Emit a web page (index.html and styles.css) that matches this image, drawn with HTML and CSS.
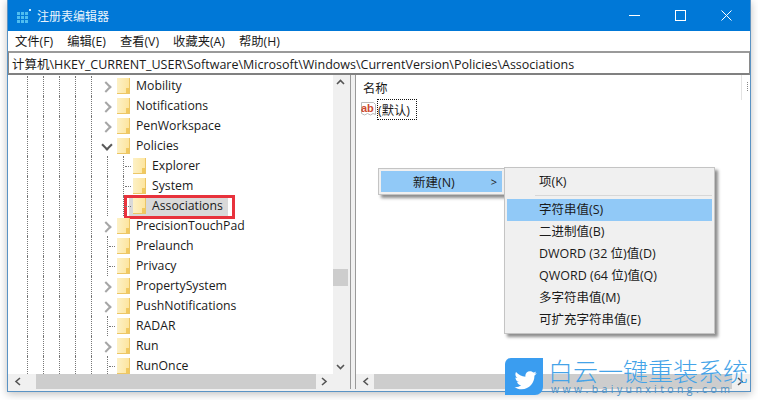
FILE: index.html
```html
<!DOCTYPE html>
<html lang="zh-CN">
<head>
<meta charset="utf-8">
<title>注册表编辑器</title>
<link rel="stylesheet" href="styles.css">
</head>
<body>
<div class="window">
  <header class="titlebar">
    <svg class="appicon" width="14" height="14" viewBox="0 0 14 14"><g fill="#4fbdf0"><rect x="0" y="3" width="3" height="3"/><rect x="4" y="3" width="3" height="3"/><rect x="8" y="3" width="3" height="3"/><rect x="0" y="7" width="3" height="3"/><rect x="4" y="7" width="3" height="3"/><rect x="8" y="7" width="3" height="3"/><rect x="0" y="11" width="3" height="3"/><rect x="4" y="11" width="3" height="3"/><rect x="8" y="11" width="3" height="3"/></g><rect x="12" y="0" width="2" height="2" fill="#cdeafa"/></svg>
    <span class="title">注册表编辑器</span>
    <div class="controls">
      <svg width="11" height="11" viewBox="0 0 11 11"><path d="M0 5.500h11" stroke="#fff" fill="none"/></svg>
      <svg width="11" height="11" viewBox="0 0 11 11"><rect x=".5" y=".5" width="10" height="10" stroke="#fff" fill="none"/></svg>
      <svg width="11" height="11" viewBox="0 0 11 11"><path d="M.5.5l10 10M10.500.5l-10 10" stroke="#fff" fill="none"/></svg>
    </div>
  </header>
  <nav class="menubar">
    <span>文件(F)</span><span>编辑(E)</span><span>查看(V)</span><span>收藏夹(A)</span><span>帮助(H)</span>
  </nav>
  <div class="address">计算机\HKEY_CURRENT_USER\Software\Microsoft\Windows\CurrentVersion\Policies\Associations</div>
  <main class="panes">
    <section class="left">
      <div class="tree-wrap">
        <div class="tree">
          <div class="row"><i></i><i></i><i></i><i></i><i></i><b class="tw closed"></b><em class="fld"></em><span>Mobility</span></div>
          <div class="row"><i></i><i></i><i></i><i></i><i></i><b class="tw closed"></b><em class="fld"></em><span>Notifications</span></div>
          <div class="row"><i></i><i></i><i></i><i></i><i></i><b class="tw closed"></b><em class="fld"></em><span>PenWorkspace</span></div>
          <div class="row"><i></i><i></i><i></i><i></i><i></i><b class="tw open"></b><em class="fld"></em><span>Policies</span></div>
          <div class="row"><i></i><i></i><i></i><i></i><i></i><i></i><b class="leaf"></b><em class="fld"></em><span>Explorer</span></div>
          <div class="row"><i></i><i></i><i></i><i></i><i></i><i></i><b class="leaf"></b><em class="fld"></em><span>System</span></div>
          <div class="row"><i></i><i></i><i></i><i></i><i></i><i></i><b class="leaf"></b><em class="fld"></em><span>Associations</span><u class="redbox"></u></div>
          <div class="row"><i></i><i></i><i></i><i></i><i></i><b class="tw closed"></b><em class="fld"></em><span>PrecisionTouchPad</span></div>
          <div class="row"><i></i><i></i><i></i><i></i><i></i><b class="leaf"></b><em class="fld"></em><span>Prelaunch</span></div>
          <div class="row"><i></i><i></i><i></i><i></i><i></i><b class="leaf"></b><em class="fld"></em><span>Privacy</span></div>
          <div class="row"><i></i><i></i><i></i><i></i><i></i><b class="tw closed"></b><em class="fld"></em><span>PropertySystem</span></div>
          <div class="row"><i></i><i></i><i></i><i></i><i></i><b class="tw closed"></b><em class="fld"></em><span>PushNotifications</span></div>
          <div class="row"><i></i><i></i><i></i><i></i><i></i><b class="leaf"></b><em class="fld"></em><span>RADAR</span></div>
          <div class="row"><i></i><i></i><i></i><i></i><i></i><b class="tw closed"></b><em class="fld"></em><span>Run</span></div>
          <div class="row"><i></i><i></i><i></i><i></i><i></i><b class="leaf"></b><em class="fld"></em><span>RunOnce</span></div>
        </div>
        <div class="vscroll">
          <svg class="arrow" width="15" height="15" viewBox="0 0 15 15"><path d="M4 9l3.500-3.500L11 9" stroke="#555" stroke-width="1.600" fill="none"/></svg>
          <div class="vtrack"><div class="vthumb"></div></div>
          <svg class="arrow" width="15" height="15" viewBox="0 0 15 15"><path d="M4 6l3.500 3.500L11 6" stroke="#555" stroke-width="1.600" fill="none"/></svg>
        </div>
      </div>
      <div class="hscroll l">
        <svg class="arrow" width="18" height="15" viewBox="0 0 18 15"><path d="M12 4L8 7.500l4 3.500" stroke="#555" stroke-width="1.600" fill="none"/></svg>
        <div class="hthumb"></div>
        <svg class="arrow" width="18" height="15" viewBox="0 0 18 15"><path d="M6 4l4 3.500L6 11" stroke="#555" stroke-width="1.600" fill="none"/></svg>
      </div>
    </section>
    <section class="right">
      <div class="list">
        <div class="colhead"><span>名称</span><span class="hdiv"></span></div>
        <div class="value">
          <svg width="16" height="17" viewBox="0 0 16 17"><path d="M.5 1.500h12l2 2v10l-2.500-1-2.500 1.500-3-1.500-3 1.500-3-1.500z" fill="#fff" stroke="#bbb"/><text x="0" y="11" class="abtxt">ab</text></svg>
          <span class="focus">(默认)</span>
        </div>
      </div>
      <div class="hscroll">
        <svg class="arrow" width="18" height="15" viewBox="0 0 18 15"><path d="M12 4L8 7.500l4 3.500" stroke="#555" stroke-width="1.600" fill="none"/></svg>
        <div class="hthumb"></div>
        <svg class="arrow" width="18" height="15" viewBox="0 0 18 15"><path d="M6 4l4 3.500L6 11" stroke="#555" stroke-width="1.600" fill="none"/></svg>
      </div>
    </section>
  </main>
</div>
<div class="menu first">
  <div class="mi hot"><span>新建(N)</span><span class="chev">&gt;</span></div>
</div>
<div class="menu sub">
  <div class="si">项(K)</div>
  <hr class="sep">
  <div class="si hot">字符串值(S)</div>
  <div class="si">二进制值(B)</div>
  <div class="si">DWORD (32 位)值(D)</div>
  <div class="si">QWORD (64 位)值(Q)</div>
  <div class="si">多字符串值(M)</div>
  <div class="si">可扩充字符串值(E)</div>
</div>
<div class="brand">
  <svg class="badge" width="38" height="37" viewBox="0 0 38 37"><path d="M6 0h32v29a8 8 0 0 1-8 8H0V6a6 6 0 0 1 6-6z" fill="#3a9df0"/><path transform="translate(4.500 5) scale(.88)" d="M31 11.500c-1 .5-2 .7-3 .8 1-.6 1.900-1.600 2.300-2.700-1 .6-2.100 1-3.300 1.300-1-1-2.300-1.600-3.800-1.600-2.900 0-5.200 2.300-5.200 5.200 0 .4 0 .8.100 1.200C13.800 15.400 10 13.300 7.400 10.200c-.4.800-.7 1.700-.7 2.600 0 1.800.9 3.400 2.300 4.300-.8 0-1.600-.3-2.300-.6 0 2.500 1.800 4.600 4.100 5.100-.8.200-1.600.2-2.300.1.600 2.100 2.600 3.600 4.800 3.600-2.200 1.700-4.900 2.500-7.600 2.200 2.300 1.500 5 2.300 7.900 2.300 9.500 0 14.700-7.900 14.700-14.700v-.7c1-.7 1.900-1.600 2.700-2.900z" fill="#fff"/></svg>
  <div class="brandtext">
    <div class="bcn">白云一键重装系统</div>
    <div class="ben">www.baiyunxitong.com</div>
  </div>
</div>
</body>
</html>
```
FILE: styles.css
```css
* { box-sizing: border-box; }
html, body { margin: 0; height: 100%; }
body {
  width: 758px; height: 400px; overflow: hidden; position: relative;
  background: #fff;
  font-family: "Open Sans", "Noto Sans CJK SC", sans-serif;
  font-size: 12.300px; color: #1a1a1a;
}
.window {
  margin-left: 7px; width: 744px; height: 392px;
  border: 1px solid #5a93c4; border-top: 0;
  background: #f0f0f0;
  box-shadow: 0 2px 8px rgba(0,0,0,.25);
  display: flex; flex-direction: column;
}
.titlebar {
  height: 31px; background: #0078d7; color: #e9f4fc;
  display: flex; align-items: center; padding-left: 9px; flex: none;
}
.appicon { margin-right: 6px; }
.title { font-size: 12px; }
.controls { margin-left: auto; display: flex; gap: 35px; padding-right: 18px; align-items: center; }
.menubar {
  height: 20px; background: #fff; display: flex; align-items: center; flex: none;
  padding-left: 7px; gap: 14px; font-size: 12.300px;
}
.address {
  height: 24px; flex: none; background: #fff;
  border: 1px solid #8a8a8a; border-width: 2px 1px;
  border-color: #9a9a9a #8a8a8a #808080;
  display: flex; align-items: center; padding-left: 3px;
  font-size: 12.500px; white-space: nowrap;
}
.panes { flex: 1; display: flex; min-height: 0; gap: 4px; padding-bottom: 2px; background: #f0f0f0; }
.left { width: 343px; display: flex; flex-direction: column; background: #fff; border-right: 1px solid #999; flex: none; }
.tree-wrap { flex: 1; display: flex; min-height: 0; }
.tree { flex: 1; overflow: hidden; padding: 1px 0 0 19px; isolation: isolate; }
.row { height: 20px; display: flex; align-items: center; position: relative; white-space: nowrap; }
.row i { width: 16px; height: 20px; flex: none; border-left: 1px dotted #777; }
.tw { width: 10px; height: 20px; flex: none; position: relative; }
.tw::after {
  content: ""; position: absolute; width: 6px; height: 6px;
  border: solid #a6a6a6; border-width: 2px 2px 0 0;
}
.tw.closed::after { transform: rotate(45deg); left: -5px; top: 7px; }
.tw.open::after { transform: rotate(135deg); border-color: #595959; left: -4px; top: 5px; }
.leaf {
  width: 10px; height: 20px; flex: none;
  border-left: 1px dotted #777; position: relative;
}
.leaf::after { content: ""; position: absolute; left: 1px; top: 10px; width: 6px; border-top: 1px dotted #777; }
.fld {
  width: 13px; height: 16px; flex: none; margin-right: 6px; position: relative;
  background: linear-gradient(to right, #fdf1c6, #fde59f);
  border-right: 1px solid #ecc666; border-bottom: 1px solid #ecc666;
}
.fld::after { content: ""; position: absolute; right: 0; bottom: 0; width: 3px; height: 5px; background: #f1c95f; }
.row span { font-size: 12.250px; line-height: 16px; }
.redbox {
  position: absolute; left: 97px; top: -1px; width: 111px; height: 24px; z-index: -1;
  border: 3px solid #e8323c;
  background: linear-gradient(#d9d9d9, #d9d9d9) no-repeat 2px 0 / 99px 100%;
  background-origin: padding-box; background-clip: padding-box;
}
.vscroll { width: 17px; flex: none; background: #f0f0f0; display: flex; flex-direction: column; }
.arrow { flex: none; display: block; }
.vtrack { flex: 1; position: relative; }
.vthumb { position: absolute; top: 179px; left: 0; width: 15px; height: 17px; background: #cdcdcd; }
.hscroll { height: 15px; flex: none; display: flex; background: #f0f0f0; }
.hscroll.l { padding-right: 16px; }
.hscroll.l .hthumb { margin-left: 10px; }
.hthumb { flex: 1; background: #cdcdcd; }
.right { flex: 1; display: flex; flex-direction: column; background: #fff; border-left: 1px solid #999; min-width: 0; }
.list { flex: 1; min-height: 0; padding: 3px 0 0 7px; }
.colhead { height: 20px; display: flex; align-items: center; }
.hdiv {
  margin-left: auto; margin-right: 2px; align-self: flex-start; margin-top: -3px;
  width: 7px; height: 25px; border-left: 1px solid #e3e3e3; position: relative;
}
.hdiv::after { content: ""; position: absolute; right: 0; top: 7px; height: 9px; border-right: 1px dotted #888; }
.value { display: flex; align-items: center; height: 21px; margin: 1px 0 0 -2px; }
.abtxt { font: bold 11px "Liberation Sans", sans-serif; fill: #cf4a2f; }
.focus { border: 1px dotted #111; padding: 0; height: 21px; width: 40px; display: flex; align-items: center; white-space: nowrap; }
.menu { position: absolute; background: #f0f0f0; border: 1px solid #c4c4c4; box-shadow: 3px 3px 3px rgba(0,0,0,.45); font-size: 12.500px; }
.first { left: 378px; top: 168px; width: 127px; height: 27px; padding: 2px; }
.mi { height: 100%; display: flex; align-items: center; padding-left: 32px; }
.hot { background: #91c9f7; }
.chev { margin-left: 36px; font-size: 11px; }
.sub { left: 504px; top: 167px; width: 211px; height: 167px; padding: 2px; }
.si { height: 22px; display: flex; align-items: center; padding: 0 0 1px 32px; white-space: nowrap; }
.sep ~ .si { padding-bottom: 3px; }
.sep { height: 1px; border: 0; background: #d7d7d7; margin: 3px 0 3px 28px; }
.brand { position: absolute; left: 505px; top: 358px; display: flex; gap: 5px; }
.badge { display: block; }
.brandtext { color: #44a3e8; }
.bcn { font-size: 25px; line-height: 26px; white-space: nowrap; font-weight: 300; }
.ben { font-size: 10.500px; line-height: 11px; letter-spacing: 3.400px; margin-left: 3px; white-space: nowrap; color: #4a8fc4; }
```
